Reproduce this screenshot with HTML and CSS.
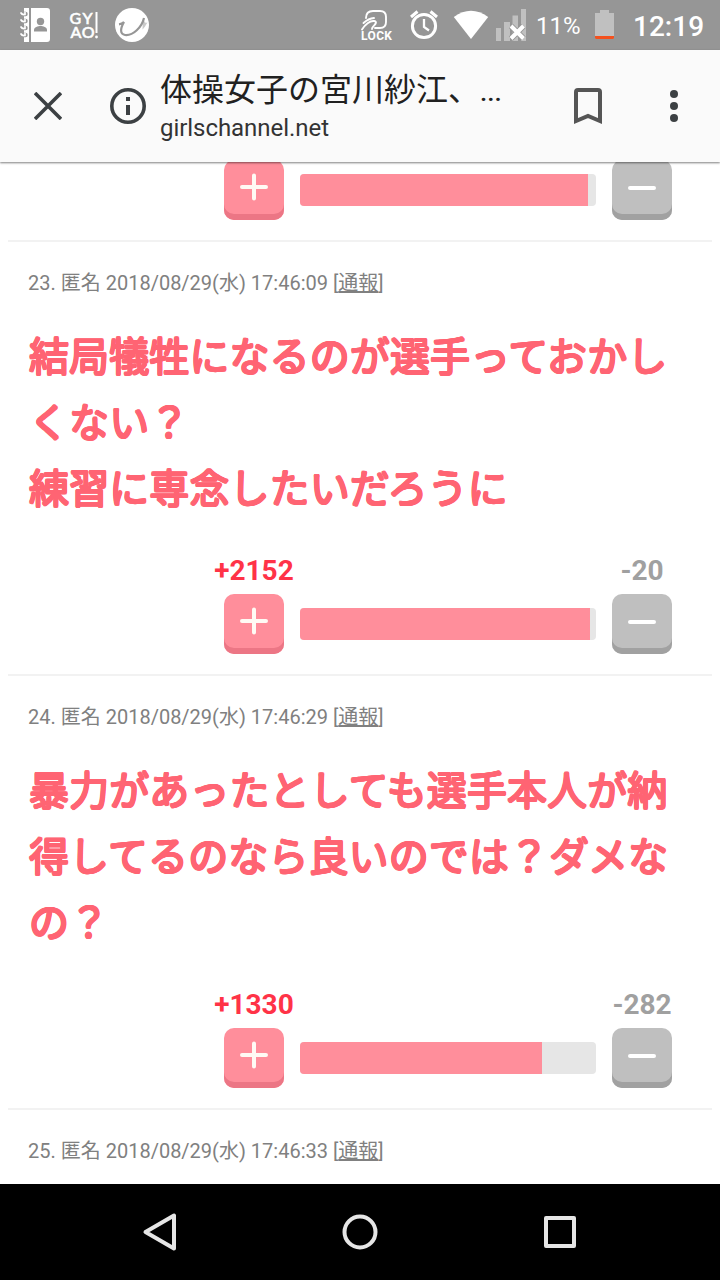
FILE: index.html
```html
<!DOCTYPE html>
<html lang="ja">
<head>
<meta charset="utf-8">
<title>体操女子の宮川紗江</title>
<link rel="stylesheet" href="styles.css">
</head>
<body>
<div class="screen">
  <div class="status">
    <svg class="status-left" width="160" height="50" viewBox="0 0 160 50">
      <path fill="#fff" d="M24 8h5v34h-5zM31 8h16a3 3 0 0 1 3 3v28a3 3 0 0 1-3 3H31z"/>
      <g fill="none" stroke="#969696" stroke-width="4.500" stroke-linecap="round"><path d="M22 14h3.500M22 21h3.500M22 28h3.500M22 35h3.500"/></g>
      <g fill="none" stroke="#fff" stroke-width="1.700" stroke-linecap="round"><path d="M21 13q1 2 4 1.500v-2M21 20q1 2 4 1.500v-2M21 27q1 2 4 1.500v-2M21 34q1 2 4 1.500v-2"/></g>
      <circle cx="40.500" cy="21.500" r="3.700" fill="#969696"/>
      <path fill="#969696" d="M34 31.500v-1.500c0-3 4-4 6.500-4s6.500 1 6.500 4v1.500z"/>
      <text class="gyao" x="69.500" y="23.700" textLength="23">GY</text>
      <text class="gyao" x="70.500" y="38" textLength="24">AO</text>
      <path d="M96.500 12v21" stroke="#fff" stroke-width="2"/><circle cx="96.500" cy="37" r="1.400" fill="#fff"/>
      <circle cx="132" cy="25" r="17" fill="#fff"/>
      <path d="M119 24.300q3-.300 5-2.300c-4 7-4 12 1 13 8 1 17-8 19-17" fill="none" stroke="#969696" stroke-width="2.200"/>
      <path d="M143 18.500c2 3 1 5 4.500 4-2 3-3 5-5 7z" fill="#969696" opacity=".5"/>
    </svg>
    <svg class="status-mid" width="180" height="50" viewBox="350 0 180 50">
      <path d="M366 18q0-7 7-7h7q6 0 6 6v5q0 6-6 6h-5M362 29.500c3-5 8-9 12-8.500 3 .5 2 2.500.5 4-2 2.500-2.500 2.500-2.500 4M363.500 23q5-4.500 10.500-5" fill="none" stroke="#fff" stroke-width="1.900" stroke-linecap="round"/>
      <text class="lock" x="361" y="40" textLength="31">LOCK</text>
      <g fill="none" stroke="#fff"><circle cx="424" cy="26" r="11.600" stroke-width="3"/><path d="M424 19v8l5 3.500" stroke-width="2.300"/><path d="M411 17l6.500-5.500M437 17l-6.500-5.500" stroke-width="3"/></g>
      <path d="M471 39L453.800 17q17.200-12.500 34.400 0z" fill="#fff"/>
      <path d="M496 28h5v13h-5zM504 22h6v19h-6zM512.500 15.500h5.500V41h-5.500zM521 9h5v32h-5z" fill="#c0c0c0"/>
      <path d="M511 26l12.500 12.500M523.500 26L511 38.500" stroke="#969696" stroke-width="6"/><path d="M511 26l12.500 12.500M523.500 26L511 38.500" stroke="#fff" stroke-width="4"/>
    </svg>
    <span class="percent">11%</span>
    <svg class="battery" width="19" height="30" viewBox="0 0 19 30"><path d="M5 0h9v3h5v23H0V3h5z" fill="#c0c0c0"/><path d="M0 26h19v2l-1 1H1l-1-1z" fill="#f4511e"/></svg>
    <span class="clock">12:19</span>
  </div>

  <header class="toolbar">
    <svg class="close" width="28" height="28" viewBox="0 0 28 28"><path d="M1 1l26 26M27 1L1 27" stroke="#3c4043" stroke-width="3.600"/></svg>
    <svg class="info" width="36" height="36" viewBox="0 0 36 36"><circle cx="18" cy="18" r="16.200" fill="none" stroke="#3c4043" stroke-width="3.600"/><path d="M16 9h4v4h-4zM16 17h4v10h-4z" fill="#3c4043"/></svg>
    <div class="page">
      <div class="page-title">体操女子の宮川紗江、<span class="dots">...</span></div>
      <div class="page-host">girlschannel.net</div>
    </div>
    <svg class="bookmark" width="28" height="36" viewBox="0 0 28 36"><path d="M2 33V4q0-2 2-2h20q2 0 2 2v29l-12-5z" fill="none" stroke="#555" stroke-width="4"/></svg>
    <svg class="more" width="8" height="32" viewBox="0 0 8 32" fill="#3c4043"><circle cx="4" cy="4" r="4"/><circle cx="4" cy="16" r="4"/><circle cx="4" cy="28" r="4"/></svg>
  </header>

  <main class="comments">
    <div class="votes first">
      <div class="btn plus"><svg width="28" height="28" viewBox="0 0 28 28"><path d="M2 14h24M14 2.500v23"/></svg></div>
      <div class="bar"><div class="fill" style="width:288px"></div></div>
      <div class="btn minus"><svg width="28" height="28" viewBox="0 0 28 28"><path d="M2 14h24"/></svg></div>
    </div>

    <article class="comment">
      <div class="meta">23. 匿名 2018/08/29(水) 17:46:09 [<span class="report">通報</span>]</div>
      <div class="body">結局犠牲になるのが選手っておかしくない？<br>練習に専念したいだろうに</div>
      <div class="counts"><span class="up">+2152</span><span class="down">-20</span></div>
      <div class="votes">
        <div class="btn plus"><svg width="28" height="28" viewBox="0 0 28 28"><path d="M2 14h24M14 2.500v23"/></svg></div>
        <div class="bar"><div class="fill" style="width:290px"></div></div>
        <div class="btn minus"><svg width="28" height="28" viewBox="0 0 28 28"><path d="M2 14h24"/></svg></div>
      </div>
    </article>

    <article class="comment">
      <div class="meta">24. 匿名 2018/08/29(水) 17:46:29 [<span class="report">通報</span>]</div>
      <div class="body">暴力があったとしても選手本人が納得してるのなら良いのでは？ダメなの？</div>
      <div class="counts"><span class="up">+1330</span><span class="down">-282</span></div>
      <div class="votes">
        <div class="btn plus"><svg width="28" height="28" viewBox="0 0 28 28"><path d="M2 14h24M14 2.500v23"/></svg></div>
        <div class="bar"><div class="fill" style="width:242px"></div></div>
        <div class="btn minus"><svg width="28" height="28" viewBox="0 0 28 28"><path d="M2 14h24"/></svg></div>
      </div>
    </article>

    <article class="comment">
      <div class="meta">25. 匿名 2018/08/29(水) 17:46:33 [<span class="report">通報</span>]</div>
    </article>
  </main>

  <nav class="nav">
    <svg width="40" height="40" viewBox="0 0 40 40"><path d="M34 3.500v33L5.500 20z"/></svg>
    <svg width="40" height="40" viewBox="0 0 40 40"><circle cx="20" cy="20" r="15.500"/></svg>
    <svg width="40" height="40" viewBox="0 0 40 40"><rect x="6" y="6" width="28" height="28"/></svg>
  </nav>
</div>
</body>
</html>
```
FILE: styles.css
```css
* { box-sizing: border-box; }
body { margin: 0; font-family: Roboto, "Noto Sans CJK JP", sans-serif; background: #fff; }
svg { display: block; flex: none; }
.screen { width: 720px; height: 1280px; display: flex; flex-direction: column; overflow: hidden; }

.status { height: 50px; flex: none; display: flex; align-items: center; background: #969696; color: #fff; }
.status-mid { margin-left: 190px; }
.gyao { font: 500 16px Lato, sans-serif; fill: #fff; stroke: #fff; stroke-width: .5px; }
.lock { font: bold 12px Roboto, sans-serif; fill: #fff; }
.percent { width: 58px; margin-left: 6px; font-size: 24px; line-height: 50px; padding-top: 2px; white-space: nowrap; }
.battery { margin-left: 1px; }
.clock { margin-left: 19px; font-size: 28px; font-weight: 500; line-height: 50px; padding-top: 3px; white-space: nowrap; }

.toolbar { height: 112px; flex: none; display: flex; align-items: center; padding-left: 34px; background: #fafafa; position: relative; z-index: 1; box-shadow: 0 1px 2px rgba(0,0,0,.5); }
.info { margin-left: 48px; }
.page { width: 360px; margin-left: 14px; height: 112px; padding-top: 15px; }
.page-title { height: 47px; line-height: 44px; font-size: 32px; color: #212121; white-space: nowrap; font-family: "Noto Sans CJK JP", sans-serif; }
.dots { font-family: Roboto, sans-serif; font-size: 26px; font-weight: 500; }
.page-host { height: 32px; line-height: 32px; font-size: 24px; letter-spacing: -.05px; color: #333; }
.bookmark { margin-left: 54px; }
.more { margin-left: 68px; }

.comments { height: 1022px; flex: none; overflow: hidden; padding: 0 8px; background: #fff; }
.votes { display: flex; align-items: center; gap: 16px; height: 60px; padding-left: 196px; }
.votes.first { margin-top: -2px; margin-bottom: 20px; padding-left: 216px; }
.btn { width: 60px; height: 60px; flex: none; border-radius: 10px; display: flex; justify-content: center; }
.btn svg { fill: none; stroke: #fffaf4; stroke-width: 4; stroke-linecap: round; }
.plus { background: #ff8e9b; box-shadow: inset 0 -6px #ec7685; padding-top: 13px; }
.minus { background: #bfbfbf; box-shadow: inset 0 -6px #a1a1a1; padding-top: 14px; }
.minus svg { stroke: #fff; }
.bar { width: 296px; height: 32px; border-radius: 4px; background: #e6e6e6; overflow: hidden; }
.fill { height: 100%; background: #ff8e9b; }

.comment { border-top: 2px solid #f2f2f2; padding: 20px; }
.meta { height: 42px; line-height: 42px; font-size: 20px; color: #808080; white-space: nowrap; }
.report { text-decoration: underline; }
.body {
  height: 201px; margin-top: 17px; padding-left: 1px;
  font: 400 40px/66px "Noto Sans CJK JP", sans-serif; letter-spacing: .1px; color: #ff6473;
  text-shadow: 1px 0 #ff6473, -1px 0 #ff6473, 0 1px #ff6473, 0 -1px #ff6473,
    .700px .700px #ff6473, -.700px .700px #ff6473, .700px -.700px #ff6473, -.700px -.700px #ff6473;
}
.counts { height: 34px; margin: 32px 0 6px; padding-left: 166px; display: flex; justify-content: space-between; width: 674px; font-size: 28px; font-weight: bold; line-height: 34px; }
.up, .down { width: 120px; text-align: center; }
.up { color: #ff3347; }
.down { color: #a0a0a0; }

.nav { height: 96px; flex: none; background: #000; display: flex; justify-content: center; align-items: center; gap: 160px; }
.nav svg { fill: none; stroke: #e6e6e6; stroke-width: 4; stroke-linejoin: round; }
```
